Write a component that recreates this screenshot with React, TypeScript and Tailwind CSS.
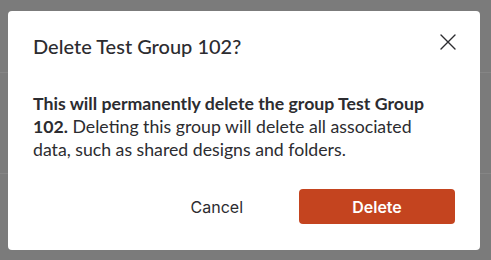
import React from "react";

export default function App() {
  return (
    <div className="relative w-[491px] h-[260px] bg-[#7b7b7b] overflow-hidden">
      <div className="absolute left-0 right-0 top-[72px] h-px bg-[#858585]" />
      <div className="absolute left-0 right-0 top-[173px] h-px bg-[#858585]" />
      <div className="absolute left-[8px] top-[11px] w-[472px] h-[239px] bg-white rounded-[4px] pl-[25px] pr-[25px] pt-[21px] text-[#2c2c30]" style={{ fontFamily: "Lato, sans-serif" }}>
        <div className="flex items-start justify-between">
          <h2 className="text-[20px] leading-[28px] font-medium">Delete Test Group 102?</h2>
          <button className="mt-[-2px] mr-[-5px] w-[24px] h-[24px] flex items-center justify-center">
            <svg width="18" height="18" viewBox="0 0 18 18" fill="none" stroke="#2c2c30" strokeWidth="1.4" strokeLinecap="round">
              <path d="M2 2L16 16M16 2L2 16" />
            </svg>
          </button>
        </div>
        <p className="mt-[32px] pr-[6px] text-[17.7px] leading-[23px]">
          <span className="font-bold">This will permanently delete the group Test Group 102.</span>{" "}
          Deleting this group will delete all associated data, such as shared designs and folders.
        </p>
        <div className="mt-[28px] flex justify-end items-center gap-[26px]" style={{ fontFamily: "Inter, sans-serif" }}>
          <button className="h-[35px] px-[30px] text-[16px] text-[#2c2c30]">Cancel</button>
          <button className="w-[156px] h-[35px] rounded-[4px] bg-[#c4441f] text-white text-[16px] font-semibold">Delete</button>
        </div>
      </div>
    </div>
  );
}
